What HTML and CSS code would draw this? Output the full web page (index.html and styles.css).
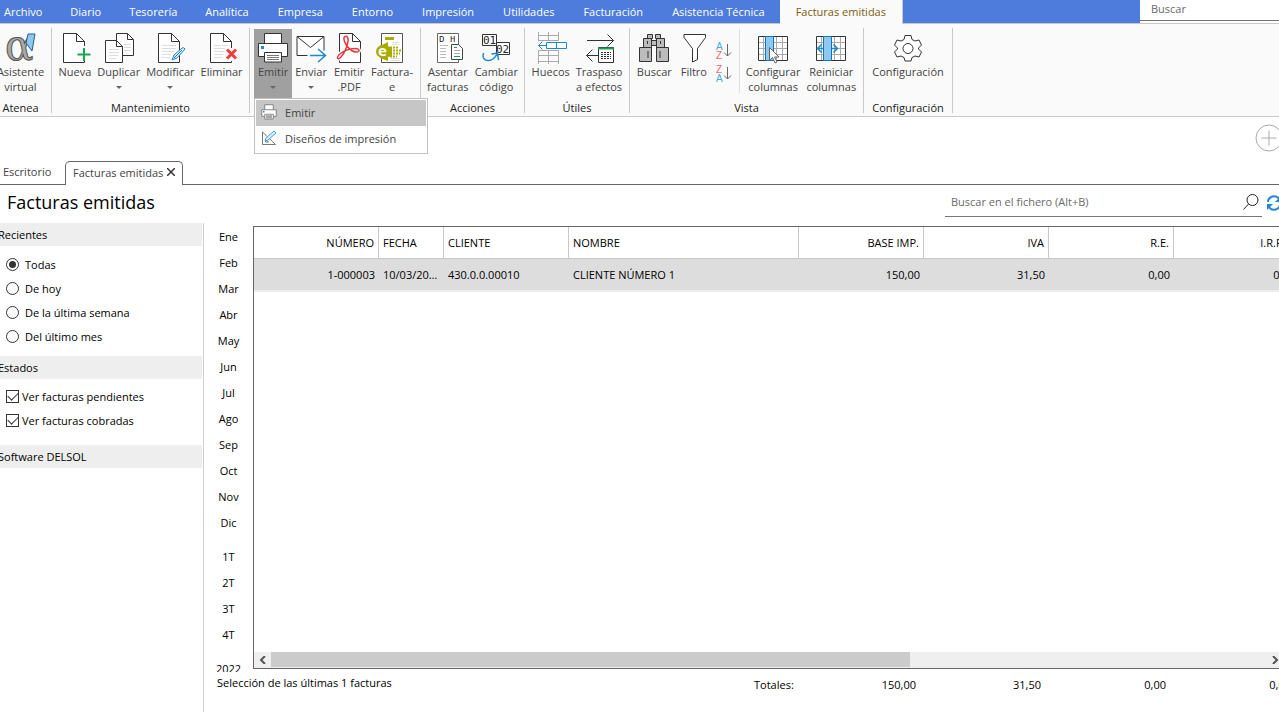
FILE: index.html
```html
<!DOCTYPE html>
<html lang="es">
<head>
<meta charset="utf-8">
<title>Facturas emitidas</title>
<link rel="stylesheet" href="styles.css">
</head>
<body>
<svg class="defs" aria-hidden="true">
  <defs>
    <g id="page"><path d="M4.500 1.500h13l8 8v21h-21z" fill="#fff"/><path d="M17.500 1.500v8h8" fill="none"/></g>
    <g id="lines"><path d="M8 13.500h14M8 16.500h14M8 19.500h12M8 22.500h9M8 25.500h8" stroke="#dcdcdc" fill="none"/></g>
    <g id="colgrid"><path d="M1.500 4.500h30v24h-30z" fill="#fff" stroke="none"/><path d="M1 10.500h30M1 16.500h30M1 22.500h30M6.500 4v24M19.500 4v24M25.500 4v24" stroke="#aaa" fill="none"/><path d="M1.500 4.500h29v24h-29z" fill="none"/></g>
    <g id="printer">
      <path d="M7.500 11.500v-10h17v10" fill="#fff"/><path d="M1.500 11.500h29v13h-29z" fill="#fff"/>
      <path d="M7.500 20.500h17v9.500h-17z" fill="#fff"/>
      <path d="M4 14h3v3h-3z" fill="#1e88d2" stroke="none"/>
      <path d="M10 23.500h12M10 25.500h12M10 27.500h12" stroke="#777"/>
    </g>
  </defs>
</svg>
<div class="app">
  <header class="topbar">
    <nav class="menu">
      <a href="#">Archivo</a><a href="#">Diario</a><a href="#">Tesorería</a><a href="#">Analítica</a><a href="#">Empresa</a><a href="#">Entorno</a><a href="#">Impresión</a><a href="#">Utilidades</a><a href="#">Facturación</a><a href="#">Asistencia Técnica</a><a href="#" class="current">Facturas emitidas</a>
    </nav>
    <div class="global-search"><input type="text" placeholder="Buscar" aria-label="Buscar"></div>
  </header>

  <section class="ribbon">
    <div class="group g-atenea">
      <div class="tools">
        <button class="tool"><svg class="ico" viewBox="0 0 32 32"><text x="1" y="28" font-family="DejaVu Serif, serif" font-size="42" fill="#a9a9a9" stroke="#555" stroke-width="1">α</text><path d="M24 2h7l-3 17-6-8z" fill="#8cc8f0" stroke="#235f91"/></svg><span>Asistente<br>virtual</span></button>
      </div>
      <h2>Atenea</h2>
    </div>
    <div class="group g-mant">
      <div class="tools">
        <button class="tool"><svg class="ico" viewBox="0 0 32 32"><use href="#page"/><path d="M19 14h9v15h-9z" fill="#fafafa" stroke="none"/><path d="M25 16v13M18.500 22.500h13" stroke="#16a850" stroke-width="2"/></svg><span>Nueva</span></button>
        <button class="tool"><svg class="ico" viewBox="0 0 32 32"><path d="M13.500 1.500h11l6 6v16h-17z" fill="#fff"/><path d="M24.500 1.500v6h6" fill="none"/><path d="M21 12.500h7M21 15.500h7M21 18.500h7" stroke="#dcdcdc"/><path d="M2.500 8.500h11l6 6v16h-17z" fill="#fff"/><path d="M13.500 8.500v6h6" fill="none"/><path d="M6 17.500h10M6 20.500h10M6 23.500h9M6 26.500h7" stroke="#dcdcdc"/></svg><span>Duplicar</span><i class="caret"></i></button>
        <button class="tool"><svg class="ico" viewBox="0 0 32 32"><use href="#page"/><use href="#lines"/><path d="m18 28 2-5 8-7q2-1 3 1l-8 9z" fill="#d9effc" stroke="#1e88d2"/><path d="m20 26 8-8" stroke="#1e88d2"/></svg><span>Modificar</span><i class="caret"></i></button>
        <button class="tool"><svg class="ico" viewBox="0 0 32 32"><use href="#page"/><use href="#lines"/><path d="M19 16h8v13h-8z" fill="#fafafa" stroke="none"/><path d="m21 17.500 9 9m0-9-9 9" stroke="#ef3e3c" stroke-width="3"/></svg><span>Eliminar</span></button>
      </div>
      <h2>Mantenimiento</h2>
    </div>
    <div class="group g-emitir">
      <div class="tools">
        <div class="has-menu">
          <button class="tool open" aria-expanded="true"><svg class="ico" viewBox="0 0 32 32"><use href="#printer"/></svg><span>Emitir</span><i class="caret"></i></button>
          <div class="dropdown">
            <button class="hover"><svg viewBox="0 0 32 32"><use href="#printer" stroke="#666" stroke-width="1.500"/></svg>Emitir</button>
            <button><svg viewBox="0 0 16 16"><path d="M1.500 2v12.500h13z" fill="#fff" stroke="#777"/><path d="M4.500 9v3h3z" stroke="#777" fill="none"/><path d="m4 11 1-3 8-7 2 2-8 7z" fill="#d9effc" stroke="#4aa0d8"/></svg>Diseños de impresión</button>
          </div>
        </div>
        <button class="tool"><svg class="ico" viewBox="0 0 32 32"><path d="M12.500 23.500h-10.500v-19h27v14" fill="#fff"/><path d="m2 4.500 13.500 11 13.500-11" fill="none"/><path d="M15 23.500h15.500m-7.500-6.500 7.500 6.500-7.500 6.500" stroke="#1e88d2" fill="none" stroke-width="1.500"/></svg><span>Enviar</span><i class="caret"></i></button>
        <button class="tool"><svg class="ico" viewBox="0 0 32 32"><path d="M6.500 1.500h13l8 8v21h-21z" fill="#fff"/><path d="M19.500 1.500v8h8" fill="none"/><path d="M12.500 4.500c-4 0 0 10 6 14 5 3 9 1 7-1s-12-1-18 4c-5 4-3 7 0 4 5-5 9-17 7-20q-1-2-2-1z" fill="none" stroke="#fff" stroke-width="4"/><path d="M12.500 4.500c-4 0 0 10 6 14 5 3 9 1 7-1s-12-1-18 4c-5 4-3 7 0 4 5-5 9-17 7-20q-1-2-2-1z" fill="none" stroke="#ee3338" stroke-width="1.500"/></svg><span>Emitir<br>.PDF</span></button>
        <button class="tool"><svg class="ico" viewBox="0 0 32 32"><path d="M5.500 1.500h21v29h-21z" fill="#fff" stroke="#555"/><path d="M9 5h9v3H9z" fill="#a8ad00" stroke="none"/><path d="M16 10.500h7M16 12.500h7M15 26.500h8M15 28.500h8" stroke="#ddd"/><path d="m4 14 8-4v4l4 2v8l-4 1v4l-8-3z" fill="#a8ad00" stroke="none"/><circle cx="6.500" cy="19.500" r="6.500" fill="#a8ad00" stroke="none"/><path d="M14 15.500h8M14 18.500h11M14 21.500h10M14 24.500h7" stroke="#a8ad00" stroke-width="2" stroke-dasharray="2 1"/><text x="2" y="24" font-family="Open Sans, sans-serif" font-size="15" font-weight="bold" fill="#fff" stroke="none">e</text></svg><span>Factura-<br>e</span></button>
      </div>
    </div>
    <div class="group g-acc">
      <div class="tools">
        <button class="tool"><svg class="ico" viewBox="0 0 32 32"><path d="M5.500 1.500h21v29h-21z" fill="#fff" stroke="#666"/><g font-family="Liberation Mono, monospace" font-size="9" fill="#222" stroke="none"><text x="7" y="10">D</text><text x="18" y="10">H</text></g><path d="M8 13.500h8M8 16.500h6M8 19.500h6M8 22.500h6M8 25.500h6" stroke="#bbb"/><path d="M19.500 12.500h7l4 4v11h-11z" fill="#fff" stroke="#444"/><path d="M22 15.500h3M22 24.500h6" stroke="#16a050"/><path d="M22 18.500h6M22 21.500h6" stroke="#aaa"/></svg><span>Asentar<br>facturas</span></button>
        <button class="tool"><svg class="ico" viewBox="0 0 32 32"><path d="M2.500 2.500h14v11h-14zM16.500 10.500h13v12h-13z" fill="#fff"/><g font-family="DejaVu Sans Mono, monospace" font-size="11" fill="#222" stroke="none"><text x="3" y="12">01</text><text x="16" y="21">02</text></g><path d="M3.500 21c-3 9 9 11 14 0m-6 1 6-1 1 7" fill="none" stroke="#1e88d2" stroke-width="1.500"/></svg><span>Cambiar<br>código</span></button>
      </div>
      <h2>Acciones</h2>
    </div>
    <div class="group g-util">
      <div class="tools">
        <button class="tool"><svg class="ico" viewBox="0 0 32 32"><path d="M3.500 0v8.500h20V0M3.500 3.500h20M13.500 0v8.500M3.500 32V18.500h20V32M3.500 23.500h20M3.500 29.500h20M13.500 18v14" fill="none" stroke="#aaa"/><path d="M11.500 10.500h20v6h-20zM21.500 10v7M11 13.500H3.500m4-4-4 4 4 4" fill="#fff" stroke="#1e88d2"/></svg><span>Huecos</span></button>
        <button class="tool"><svg class="ico" viewBox="0 0 32 32"><path d="M4 8.500h26.500m-6-6 6 6-6 6M15 23.500H3.500m6-6-6 6 6 6" fill="none"/><path d="M15.500 15.500h15v15h-15z" fill="#fff"/><path d="M15 16.500h16" stroke="#16a050" stroke-width="2"/><path d="M18 20.500h10M18 22.500h10M18 24.500h10M18 26.500h10" stroke-dasharray="2 1"/></svg><span>Traspaso<br>a efectos</span></button>
      </div>
      <h2>Útiles</h2>
    </div>
    <div class="group g-vista">
      <div class="tools">
        <button class="tool"><svg class="ico" viewBox="0 0 32 32"><g fill="#bcbcbc"><path d="M9.500 2.500h5v4h-5zM17.500 2.500h5v4h-5zM5.500 6.500h8v9h-8zM18.500 6.500h8v9h-8zM13.500 8.500h5v5h-5zM1.500 15.500h12v14h-12zM18.500 15.500h12v14h-12z"/></g><path d="M9.500 9v3M22.500 9v3M10 19v7M22 19v7"/></svg><span>Buscar</span></button>
        <button class="tool"><svg class="ico" viewBox="0 0 32 32"><path d="M6 2.500h21.500v3l-8 11v11l-5 2.500V16.500l-8.500-11z" fill="#fff"/></svg><span>Filtro</span></button>
        <div class="sorts">
          <button aria-label="Orden ascendente"><svg viewBox="0 0 16 18"><g font-family="Liberation Sans, sans-serif" font-size="10" stroke="none"><text x="0" y="8" fill="#4aa8dc">A</text><text x="0" y="17" fill="#ee6a6a">Z</text></g><path d="M11.500 2v12m-3.500-3.500 3.500 3.500 3.500-3.500" fill="none" stroke="#666"/></svg></button>
          <button aria-label="Orden descendente"><svg viewBox="0 0 16 18"><g font-family="Liberation Sans, sans-serif" font-size="10" stroke="none"><text x="0" y="8" fill="#ee6a6a">Z</text><text x="0" y="17" fill="#4aa8dc">A</text></g><path d="M11.500 2v12m-3.500-3.500 3.500 3.500 3.500-3.500" fill="none" stroke="#666"/></svg></button>
        </div>
        <button class="tool"><svg class="ico" viewBox="0 0 32 32"><use href="#colgrid"/><path d="M8.500 4.500h8v24h-8z" fill="#8cc8f0" stroke="#1673b8"/><path d="M12.500 15.500v13l3-3 2.500 5.500 2-1-2.500-5h4.500z" fill="#fff" stroke="#666"/></svg><span>Configurar<br>columnas</span></button>
        <button class="tool"><svg class="ico" viewBox="0 0 32 32"><use href="#colgrid"/><path d="M8.500 4.500h8v24h-8z" fill="#8cc8f0" stroke="#1673b8"/><path d="M8 16.500H2.500m4-4-4 4 4 4M17 16.500h5.500m-4-4 4 4-4 4" fill="none" stroke="#1e88d2" stroke-width="1.500"/></svg><span>Reiniciar<br>columnas</span></button>
      </div>
      <h2>Vista</h2>
    </div>
    <div class="group g-conf">
      <div class="tools">
        <button class="tool"><svg class="ico" viewBox="0 0 32 32"><path d="M13 3.500h6l1 4 3 1.500 4-1 2.500 5-3 3v1l3 3-2.500 5-4-1-3 1.500-1 3.500h-6l-1-3.500-3-1.500-4 1-2.500-5 3-3v-1l-3-3 2.500-5 4 1 3-1.500z" fill="#fff"/><circle cx="16" cy="16.500" r="5" fill="#fff"/></svg><span>Configuración</span></button>
      </div>
      <h2>Configuración</h2>
    </div>
  </section>

  <div class="quick"><button aria-label="Añadir"><svg viewBox="0 0 28 28"><circle cx="14" cy="14" r="13"/><path d="M6.500 14h15M14 6.500v15"/></svg></button></div>

  <nav class="doc-tabs">
    <a href="#">Escritorio</a>
    <div class="active"><a href="#">Facturas emitidas</a><button aria-label="Cerrar"><svg viewBox="0 0 8 8"><path d="m0 0 8 8m0-8-8 8"/></svg></button></div>
  </nav>

  <div class="heading">
    <h1>Facturas emitidas</h1>
    <div class="file-search">
      <input type="text" placeholder="Buscar en el fichero (Alt+B)" aria-label="Buscar en el fichero">
      <button aria-label="Buscar"><svg viewBox="0 0 16 16"><circle cx="9.500" cy="6" r="5.500"/><path d="M5.500 10 .5 15.500"/></svg></button>
    </div>
    <button class="refresh" aria-label="Actualizar"><svg viewBox="0 0 16 16"><path d="M2 7a6 6 0 0 1 11-3M14 9a6 6 0 0 1-11 3"/><path d="M15 1v6H9zM1 15V9h6z" class="tips"/></svg></button>
  </div>

  <main class="content">
    <aside class="filters">
      <h3>Recientes</h3>
      <div class="options">
        <label><input type="radio" name="rec" checked>Todas</label>
        <label><input type="radio" name="rec">De hoy</label>
        <label><input type="radio" name="rec">De la última semana</label>
        <label><input type="radio" name="rec">Del último mes</label>
      </div>
      <h3>Estados</h3>
      <div class="options checks">
        <label><input type="checkbox" checked>Ver facturas pendientes</label>
        <label><input type="checkbox" checked>Ver facturas cobradas</label>
      </div>
      <h3>Software DELSOL</h3>
    </aside>
    <div class="workspace">
      <div class="upper">
        <nav class="periods">
          <a href="#">Ene</a><a href="#">Feb</a><a href="#">Mar</a><a href="#">Abr</a><a href="#">May</a><a href="#">Jun</a><a href="#">Jul</a><a href="#">Ago</a><a href="#">Sep</a><a href="#">Oct</a><a href="#">Nov</a><a href="#">Dic</a>
          <a href="#" class="first">1T</a><a href="#">2T</a><a href="#">3T</a><a href="#">4T</a>
          <a href="#" class="first">2022</a>
        </nav>
        <div class="grid">
          <div class="grid-view">
            <table>
              <colgroup><col class="w-num"><col class="w-date"><col class="w-num"><col class="w-name"><col class="w-num"><col class="w-num"><col class="w-num"><col class="w-num"></colgroup>
              <thead><tr><th class="num">NÚMERO</th><th>FECHA</th><th>CLIENTE</th><th>NOMBRE</th><th class="num">BASE IMP.</th><th class="num">IVA</th><th class="num">R.E.</th><th class="num">I.R.P.F.</th></tr></thead>
              <tbody><tr><td class="num">1-000003</td><td>10/03/2022</td><td>430.0.0.00010</td><td>CLIENTE NÚMERO 1</td><td class="num">150,00</td><td class="num">31,50</td><td class="num">0,00</td><td class="num">0,00</td></tr></tbody>
            </table>
          </div>
          <div class="scrollbar">
            <button aria-label="Izquierda"><svg viewBox="0 0 8 8"><path d="M6 0 2 4l4 4"/></svg></button>
            <div class="track"><div class="thumb"></div></div>
            <button class="right" aria-label="Derecha"><svg viewBox="0 0 8 8"><path d="m2 0 4 4-4 4"/></svg></button>
          </div>
        </div>
      </div>
      <footer class="summary">
        <p>Selección de las últimas 1 facturas</p>
        <div class="totals"><span class="caption">Totales:</span><span>150,00</span><span>31,50</span><span>0,00</span><span>0,00</span></div>
      </footer>
    </div>
  </main>
</div>
</body>
</html>
```
FILE: styles.css
```css
* { box-sizing: border-box; }
body { margin: 0; background: #fff; color: #000; font: 11px/15px "Open Sans", "Noto Sans", sans-serif; }
h1, h2, h3, p { margin: 0; font-weight: 400; }
a { color: inherit; text-decoration: none; }
button { margin: 0; padding: 0; border: 0; background: none; color: inherit; font: inherit; }
input { margin: 0; font: inherit; }
input::placeholder { color: #6a6a6a; opacity: 1; }
svg { display: block; flex: none; }
.defs { position: absolute; width: 0; height: 0; }
.app { display: flex; flex-direction: column; height: 100vh; overflow: hidden; }

.topbar { display: flex; justify-content: space-between; background: #4d7cdc; color: #fff; border-bottom: 1px solid #c8c8c8; height: 24px; flex: none; }
.menu { display: flex; white-space: nowrap; }
.menu a { padding: 4px 14px; }
.menu a:first-child { padding-left: 4px; }
.menu a:nth-child(n+5) { margin-left: 1px; }
.menu .current { background: #fafafa; color: #7d5c0a; padding: 4px 16px; margin-bottom: -1px; border-right: 1px solid #c8c8c8; }
.global-search { width: 139px; background: #fff; height: 23px; }
.global-search input { width: 100%; height: 21px; border: 0; border-bottom: 1px solid #777; padding: 0 11px 3px; outline: 0; }

.ribbon { display: flex; flex: none; background: #fafafa; border-bottom: 1px solid #c8c8c8; padding: 4px 0 3px; color: #444; }
.group { position: relative; display: flex; flex-direction: column; justify-content: space-between; height: 85px; border-right: 1px solid #c8c8c8; flex: none; }
.group h2 { font-size: 11px; line-height: 11px; color: #222; text-align: center; }
.g-atenea { width: 62px; margin-left: -10px; }
.g-mant { width: 198px; }
.g-emitir { width: 171px; }
.g-acc { width: 104px; }
.g-util { width: 105px; }
.g-vista { width: 234px; }
.g-conf { width: 89px; }
.tools { display: flex; justify-content: center; padding-top: 1px; }
.tool { display: flex; flex-direction: column; align-items: center; padding: 3px 3px 0; text-align: center; height: 69px; white-space: nowrap; }
.ico { width: 32px; height: 32px; stroke: #333; }
.caret { border: 3px solid transparent; border-top-color: #666; border-bottom: 0; margin-top: 7px; }
.open { background: #a0a0a0; }
.has-menu { position: relative; }
.dropdown { position: absolute; z-index: 2; left: 0; top: 69px; width: 174px; padding: 1px; background: #fff; border: 1px solid #c0c0c0; }
.dropdown button { display: flex; align-items: center; gap: 8px; width: 100%; height: 26px; padding: 0 5px 2px; color: #444; white-space: nowrap; }
.dropdown .hover { background: #c6c6c6; }
.dropdown svg { width: 16px; height: 16px; }
.sorts { display: flex; flex-direction: column; gap: 5px; padding: 13px 7px 0 3px; margin-right: 3px; border-right: 1px solid #dedede; height: 64px; }
.sorts svg { width: 16px; height: 18px; }

.quick { display: flex; justify-content: flex-end; height: 44px; padding-top: 7px; flex: none; }
.quick button { margin-right: -4px; width: 28px; height: 28px; }
.quick svg { width: 28px; height: 28px; fill: none; stroke: #aaa; }

.doc-tabs { display: flex; height: 24px; flex: none; border-bottom: 1px solid #666; color: #444; white-space: nowrap; }
.doc-tabs > a { width: 65px; padding: 3px; }
.doc-tabs .active { display: flex; align-items: center; gap: 4px; padding: 0 7px 3px; height: 24px; background: #fff; border: 1px solid #666; border-bottom: 0; border-radius: 5px 5px 0 0; }
.doc-tabs svg { width: 8px; height: 8px; stroke: #333; stroke-width: 1.500; }

.heading { display: flex; align-items: flex-start; height: 38px; flex: none; padding-left: 7px; }
h1 { flex: 1; font-size: 18px; line-height: 34px; }
.file-search { display: flex; width: 317px; height: 32px; border-bottom: 1px solid #777; align-items: center; padding: 2px 3px 0 6px; }
.file-search input { flex: 1; border: 0; padding: 0; outline: 0; }
.file-search svg { width: 16px; height: 16px; fill: none; stroke: #222; }
.refresh { margin: 10px -3px 0 4px; }
.refresh svg { width: 16px; height: 16px; fill: none; stroke: #1e88d2; stroke-width: 2; }
.refresh .tips { fill: #1e88d2; stroke: none; }

.content { display: flex; flex: 1; min-height: 0; }
.filters { width: 204px; flex: none; padding-right: 1px; border-right: 1px solid #d0d0d0; }
.filters h3 { height: 23px; margin-left: -12px; padding: 4px 0 0 10px; background: #eee; font-size: 11px; line-height: 15px; }
.options { display: flex; flex-direction: column; padding: 6px 0 8px 6px; }
.options.checks { padding: 5px 0 13px 6px; }
.options label { display: flex; align-items: center; gap: 6px; height: 24px; }
.options.checks label { gap: 3px; }
.options input { appearance: none; width: 13px; height: 13px; border: 1px solid #333; background: #fff; display: grid; place-items: center; }
.options input[type=radio] { border-radius: 50%; }
.options input[type=radio]:checked::before { content: ""; width: 7px; height: 7px; border-radius: 50%; background: #333; }
.options input[type=checkbox]:checked::before { content: ""; width: 9px; height: 5px; border: solid #333; border-width: 0 0 1px 1px; transform: rotate(-45deg); margin-bottom: 3px; }

.workspace { display: flex; flex-direction: column; flex: 1; min-width: 0; }
.upper { display: flex; flex: 1; min-height: 0; padding-top: 1px; }
.periods { display: flex; flex-direction: column; width: 49px; flex: none; overflow: hidden; margin-bottom: -3px; }
.periods a { height: 26px; flex: none; line-height: 26px; text-align: center; }
.periods .first { margin-top: 8px; }
.grid { display: flex; flex-direction: column; flex: 1; min-width: 0; margin-top: 2px; border: 1px solid #666; border-right: 0; }
.grid-view { flex: 1; overflow: hidden; }
table { table-layout: fixed; width: 1045px; border-collapse: separate; border-spacing: 0; }
.w-num { width: 125px; }
.w-date { width: 65px; }
.w-name { width: 230px; }
th, td { height: 32px; padding: 0 4px; font-weight: 400; text-align: left; white-space: nowrap; overflow: hidden; text-overflow: ellipsis; }
th { border-right: 1px solid #c8c8c8; border-bottom: 1px solid #c8c8c8; }
td { height: 33px; background: #ddd; border-bottom: 2px solid #eee; }
.num { text-align: right; }
.scrollbar { display: flex; align-items: stretch; height: 16px; background: #efefef; }
.scrollbar button { display: flex; align-items: center; justify-content: center; width: 17px; }
.scrollbar .right { width: 9px; }
.scrollbar svg { width: 8px; height: 8px; fill: none; stroke: #555; stroke-width: 2; }
.track { flex: 1; }
.thumb { width: 64%; height: 15px; background: #cbcbcb; }
.summary { display: flex; height: 43px; flex: none; padding-left: 13px; overflow: hidden; }
.summary p { width: 537px; flex: none; padding-top: 6px; }
.totals { display: flex; flex: none; padding-top: 8px; }
.totals span { width: 125px; text-align: right; }
.totals .caption { width: 37px; text-align: left; }
```
